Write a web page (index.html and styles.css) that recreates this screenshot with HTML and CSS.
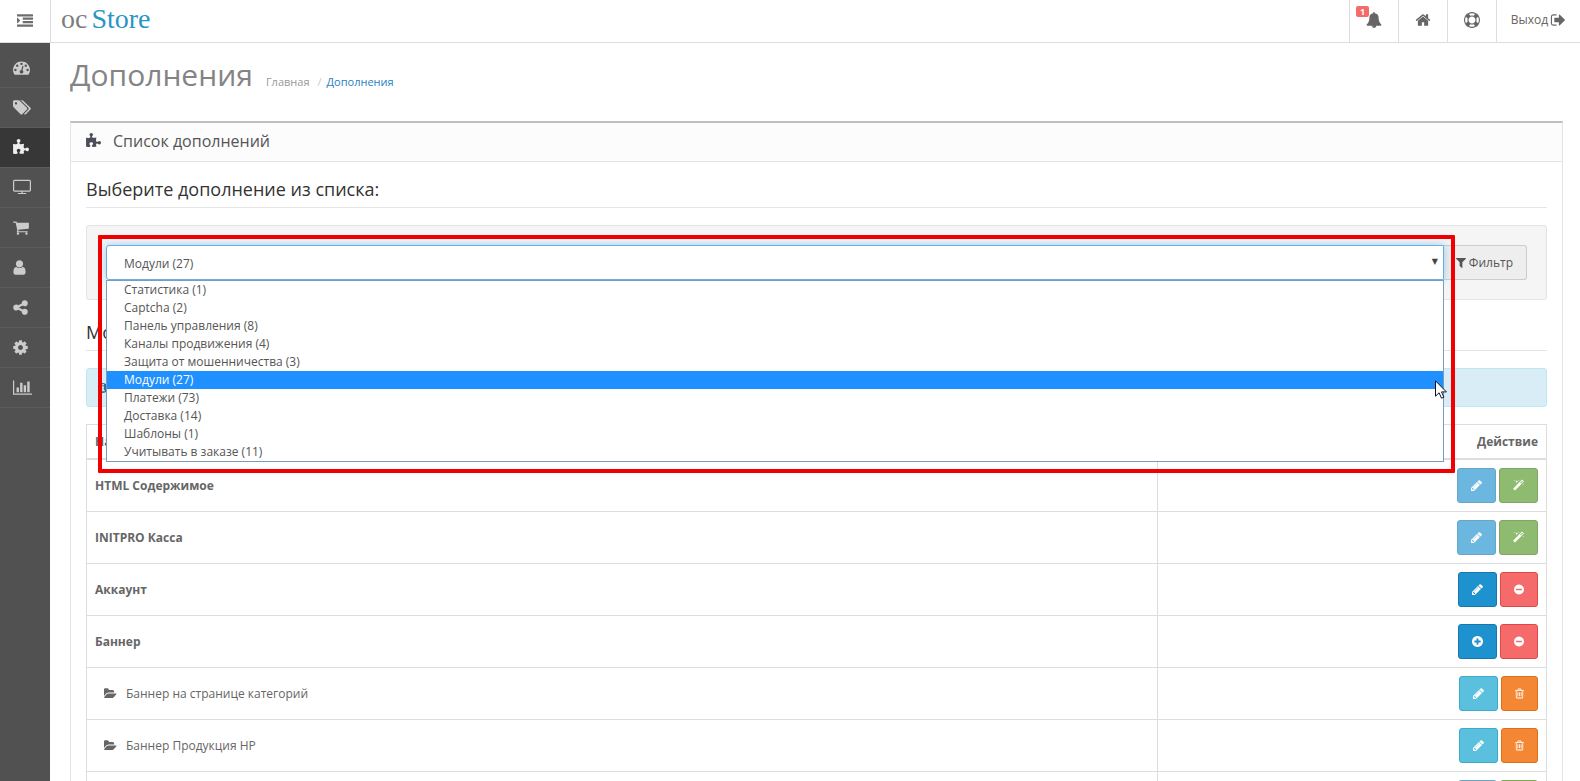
FILE: index.html
```html
<!DOCTYPE html>
<html lang="ru">
<head>
    <meta charset="UTF-8">
    <meta name="viewport" content="width=device-width, initial-scale=1.0">
    <title>Дополнения</title>
    <link rel="stylesheet" href="styles.css">
</head>
<body>
<svg class="sprite" aria-hidden="true">
    <symbol id="i-indent" viewBox="0 0 1792 1792"><path d="M352 832q0 14-9 23l-288 288q-9 9-23 9-13 0-22.500-9.500t-9.500-22.500v-576q0-13 9.500-22.500t22.500-9.500q14 0 23 9l288 288q9 9 9 23zm1440 480v192q0 13-9.500 22.500t-22.500 9.500h-1728q-13 0-22.500-9.500t-9.500-22.500v-192q0-13 9.500-22.500t22.500-9.500h1728q13 0 22.500 9.500t9.500 22.500zm0-384v192q0 13-9.500 22.500t-22.500 9.500h-1088q-13 0-22.500-9.500t-9.500-22.500v-192q0-13 9.500-22.500t22.500-9.500h1088q13 0 22.500 9.500t9.500 22.500zm0-384v192q0 13-9.500 22.500t-22.500 9.500h-1088q-13 0-22.500-9.500t-9.500-22.500v-192q0-13 9.500-22.500t22.500-9.500h1088q13 0 22.500 9.500t9.500 22.500zm0-384v192q0 13-9.500 22.500t-22.500 9.500h-1728q-13 0-22.500-9.500t-9.500-22.500v-192q0-13 9.500-22.500t22.500-9.500h1728q13 0 22.500 9.500t9.500 22.500z"/></symbol>
    <symbol id="i-dashboard" viewBox="0 0 1792 1792"><path d="M384 1152q0-53-37.500-90.500t-90.500-37.500-90.500 37.500-37.500 90.500 37.500 90.500 90.500 37.500 90.500-37.500 37.500-90.500zm192-448q0-53-37.500-90.500t-90.500-37.500-90.500 37.500-37.500 90.500 37.500 90.500 90.500 37.500 90.500-37.500 37.500-90.500zm428 481l101-382q6-26-7.500-48.500t-38.500-29.500-48 6.500-30 39.500l-101 382q-60 5-107 43.500t-63 98.500q-20 77 20 146t117 89 146-20 89-117q16-60-6-117t-72-91zm660-33q0-53-37.500-90.500t-90.500-37.500-90.500 37.500-37.500 90.500 37.500 90.500 90.500 37.500 90.500-37.500 37.500-90.500zm-640-640q0-53-37.500-90.500t-90.500-37.500-90.500 37.500-37.500 90.500 37.500 90.500 90.500 37.500 90.500-37.500 37.500-90.500zm448 192q0-53-37.500-90.500t-90.500-37.500-90.500 37.500-37.500 90.500 37.500 90.500 90.500 37.500 90.500-37.500 37.500-90.500zm320 448q0 261-141 483-19 29-54 29h-1402q-35 0-54-29-141-221-141-483 0-182 71-348t191-286 286-191 348-71 348 71 286 191 191 286 71 348z"/></symbol>
    <symbol id="i-tags" viewBox="0 0 1920 1792"><path d="M448 448q0-53-37.500-90.500t-90.500-37.500-90.500 37.500-37.500 90.500 37.500 90.500 90.500 37.500 90.500-37.500 37.500-90.500zm1067 576q0 53-37 90l-491 492q-39 37-91 37-53 0-90-37l-715-716q-38-37-64.500-101t-26.500-117v-416q0-52 38-90t90-38h416q53 0 117 26.500t102 64.500l715 714q37 39 37 91zm384 0q0 53-37 90l-491 492q-39 37-91 37-36 0-59-14t-53-45l470-470q37-37 37-90 0-52-37-91l-715-714q-38-38-102-64.500t-117-26.500h224q53 0 117 26.500t102 64.500l715 714q37 39 37 91z"/></symbol>
    <symbol id="i-puzzle" viewBox="64 0 1664 1792"><path d="M1728 1098q0 81-44.500 135t-123.500 54q-41 0-77.500-17.500t-59-38-56.500-38-71-17.500q-110 0-110 124 0 39 16 115t15 115v5q-22 0-33 1-34 3-97.500 11.500t-115.500 13.500-98 5q-61 0-103-26.500t-42-83.500q0-37 17.500-71t38-56.500 38-59 17.500-77.500q0-79-54-123.500t-135-44.500q-84 0-143 45.500t-59 127.500q0 43 15 83t33.500 64.500 33.500 53 15 50.500q0 45-46 89-37 35-117 35-95 0-245-24-9-2-27.500-4t-27.500-4l-13-2q-1 0-3-1-2 0-2-1v-1024q2 1 17.500 3.500t34 5 21.500 3.500q150 24 245 24 80 0 117-35 46-44 46-89 0-22-15-50.500t-33.500-53-33.500-64.500-15-83q0-82 59-127.500t144-45.500q80 0 134 44.500t54 123.500q0 41-17.500 77.500t-38 59-38 56.500-17.500 71q0 57 42 83.500t103 26.500q64 0 180-15t163-17v2q-1 2-3.500 17.500t-5 34-3.500 21.500q-24 150-24 245 0 80 35 117 44 46 89 46 22 0 50.500-15t53-33.500 64.500-33.500 83-15q82 0 127.500 59t45.500 143z"/></symbol>
    <symbol id="i-tv" viewBox="0 -64 1920 1792"><path d="M1792 1120v-960q0-13-9.500-22.500t-22.500-9.500h-1600q-13 0-22.500 9.500t-9.500 22.500v960q0 13 9.500 22.500t22.500 9.500h1600q13 0 22.500-9.500t9.500-22.500zm128-960v960q0 66-47 113t-113 47h-736v128h352q14 0 23 9t9 23v64q0 14-9 23t-23 9h-832q-14 0-23-9t-9-23v-64q0-14 9-23t23-9h352v-128h-736q-66 0-113-47t-47-113v-960q0-66 47-113t113-47h1600q66 0 113 47t47 113z"/></symbol>
    <symbol id="i-cart" viewBox="64 0 1664 1792"><path d="M704 1536q0 52-38 90t-90 38-90-38-38-90 38-90 90-38 90 38 38 90zm896 0q0 52-38 90t-90 38-90-38-38-90 38-90 90-38 90 38 38 90zm128-1088v512q0 24-16.500 42.500t-40.500 21.500l-1044 122q13 60 13 70 0 16-24 64h920q26 0 45 19t19 45-19 45-45 19h-1024q-26 0-45-19t-19-45q0-11 8-31.500t16-36 21.500-40 15.500-29.500l-177-823h-204q-26 0-45-19t-19-45 19-45 45-19h256q16 0 28.500 6.500t19.500 15.500 13 24.500 8 26 5.500 29.500 4.500 26h1201q26 0 45 19t19 45z"/></symbol>
    <symbol id="i-user" viewBox="256 0 1280 1792"><path d="M1536 1399q0 109-62.500 187t-150.500 78h-854q-88 0-150.500-78t-62.500-187q0-85 8.500-160.500t31.500-152 58.500-131 94-89 134.500-34.500q131 128 313 128t313-128q76 0 134.500 34.500t94 89 58.500 131 31.500 152 8.500 160.500zm-256-887q0 159-112.500 271.500t-271.500 112.500-271.500-112.500-112.500-271.500 112.500-271.500 271.500-112.500 271.500 112.500 112.500 271.500z"/></symbol>
    <symbol id="i-share" viewBox="128 0 1536 1792"><path d="M1344 1024q133 0 226.500 93.500t93.500 226.500-93.500 226.500-226.500 93.500-226.500-93.500-93.500-226.500q0-12 2-34l-360-180q-92 86-218 86-133 0-226.500-93.500t-93.500-226.500 93.500-226.500 226.500-93.500q126 0 218 86l360-180q-2-22-2-34 0-133 93.500-226.500t226.500-93.500 226.500 93.500 93.500 226.500-93.500 226.500-226.500 93.500q-126 0-218-86l-360 180q2 22 2 34t-2 34l360 180q92-86 218-86z"/></symbol>
    <symbol id="i-cog" viewBox="128 0 1536 1792"><path d="M1152 896q0-106-75-181t-181-75-181 75-75 181 75 181 181 75 181-75 75-181zm512-109v222q0 12-8 23t-20 13l-185 28q-19 54-39 91 35 50 107 138 10 12 10 25t-9 23q-27 37-99 108t-94 71q-12 0-26-9l-138-108q-44 23-91 38-16 136-29 186-7 28-36 28h-222q-14 0-24.500-8.500t-11.500-21.500l-28-184q-49-16-90-37l-141 107q-10 9-25 9-14 0-25-11-126-114-165-168-7-10-7-23 0-12 8-23 15-21 51-66.500t54-70.500q-27-50-41-99l-183-27q-13-2-21-12.500t-8-23.500v-222q0-12 8-23t19-13l186-28q14-46 39-92-40-57-107-138-10-12-10-24 0-10 9-23 26-36 98.500-107.500t94.500-71.500q13 0 26 10l138 107q44-23 91-38 16-136 29-186 7-28 36-28h222q14 0 24.500 8.500t11.500 21.500l28 184q49 16 90 37l142-107q9-9 24-9 13 0 25 10 129 119 165 170 7 8 7 22 0 12-8 23-15 21-51 66.500t-54 70.500q26 50 41 98l183 28q13 2 21 12.500t8 23.500z"/></symbol>
    <symbol id="i-chart" viewBox="0 0 2048 1792"><path d="M640 896v512h-256v-512h256zm384-512v1024h-256v-1024h256zm1024 1152v128h-2048v-1536h128v1408h1920zm-640-896v768h-256v-768h256zm384-384v1152h-256v-1152h256z"/></symbol>
    <symbol id="i-bell" viewBox="0 0 1792 1792"><path d="M912 1696q0-16-16-16-59 0-101.500-42.500t-42.500-101.500q0-16-16-16t-16 16q0 73 51.500 124.500t124.500 51.500q16 0 16-16zm816-288q0 52-38 90t-90 38h-448q0 106-75 181t-181 75-181-75-75-181h-448q-52 0-90-38t-38-90q50-42 91-88t85-119.500 74.500-158.500 50-206 19.500-260q0-152 117-282.500t307-158.500q-8-19-8-39 0-40 28-68t68-28 68 28 28 68q0 20-8 39 190 28 307 158.500t117 282.500q0 139 19.500 260t50 206 74.500 158.500 85 119.500 91 88z"/></symbol>
    <symbol id="i-home" viewBox="64 0 1664 1792"><path d="M1472 992v480q0 26-19 45t-45 19h-384v-384h-256v384h-384q-26 0-45-19t-19-45v-480q0-1 .5-3t.5-3l575-474 575 474q1 2 1 6zm223-69l-62 74q-8 9-21 11h-3q-13 0-21-7l-692-577-692 577q-12 8-24 7-13-2-21-11l-62-74q-8-10-7-23.500t11-21.500l719-599q32-26 76-26t76 26l244 204v-195q0-14 9-23t23-9h192q14 0 23 9t9 23v408l219 182q10 8 11 21.500t-7 23.500z"/></symbol>
    <symbol id="i-ring" viewBox="0 0 1792 1792"><path d="M896 0q182 0 348 71t286 191 191 286 71 348-71 348-191 286-286 191-348 71-348-71-286-191-191-286-71-348 71-348 191-286 286-191 348-71zm0 128q-190 0-361 90l194 194q82-28 167-28t167 28l194-194q-171-90-361-90zm-678 1129l194-194q-28-82-28-167t28-167l-194-194q-90 171-90 361t90 361zm678 407q190 0 361-90l-194-194q-82 28-167 28t-167-28l-194 194q171 90 361 90zm0-384q159 0 271.500-112.500t112.500-271.500-112.500-271.500-271.500-112.500-271.500 112.500-112.500 271.500 112.500 271.500 271.500 112.500zm484-217l194 194q90-171 90-361t-90-361l-194 194q28 82 28 167t-28 167z"/></symbol>
    <symbol id="i-signout" viewBox="64 0 1600 1792"><path d="M704 1440q0 4 1 20t.5 26.500-3 23.500-10 19.500-20.500 6.500h-320q-119 0-203.500-84.500t-84.500-203.500v-704q0-119 84.500-203.500t203.500-84.500h320q13 0 22.500 9.500t9.500 22.500q0 4 1 20t.5 26.500-3 23.500-10 19.500-20.500 6.500h-320q-66 0-113 47t-47 113v704q0 66 47 113t113 47h312l11.500 1 11.500 3 8 5.500 7 9 2 13.500zm928-544q0 26-19 45l-544 544q-19 19-45 19t-45-19-19-45v-288h-448q-26 0-45-19t-19-45v-384q0-26 19-45t45-19h448v-288q0-26 19-45t45-19 45 19l544 544q19 19 19 45z"/></symbol>
    <symbol id="i-pencil" viewBox="128 0 1536 1792"><path d="M491 1536l91-91-235-235-91 91v107h128v128h107zm523-928q0-22-22-22-10 0-17 7l-542 542q-7 7-7 17 0 22 22 22 10 0 17-7l542-542q7-7 7-17zm-54-192l416 416-832 832h-416v-416zm683 96q0 53-37 90l-166 166-416-416 166-165q36-38 90-38 53 0 91 38l235 234q37 39 37 91z"/></symbol>
    <symbol id="i-magic" viewBox="64 0 1664 1792"><path d="M1254 581l293-293-107-107-293 293zm447-293q0 27-18 45l-1286 1286q-18 18-45 18t-45-18l-198-198q-18-18-18-45t18-45l1286-1286q18-18 45-18t45 18l198 198q18 18 18 45zm-1351-190l98 30-98 30-30 98-30-98-98-30 98-30 30-98zm350 162l196 60-196 60-60 196-60-196-196-60 196-60 60-196zm930 478l98 30-98 30-30 98-30-98-98-30 98-30 30-98zm-640-640l98 30-98 30-30 98-30-98-98-30 98-30 30-98z"/></symbol>
    <symbol id="i-minus" viewBox="128 0 1536 1792"><path d="M1344 960v-128q0-26-19-45t-45-19h-768q-26 0-45 19t-19 45v128q0 26 19 45t45 19h768q26 0 45-19t19-45zm320-64q0 209-103 385.500t-279.500 279.500-385.500 103-385.500-103-279.500-279.500-103-385.500 103-385.500 279.500-279.500 385.500-103 385.500 103 279.500 279.500 103 385.500z"/></symbol>
    <symbol id="i-plus" viewBox="128 0 1536 1792"><path d="M1344 960v-128q0-26-19-45t-45-19h-256v-256q0-26-19-45t-45-19h-128q-26 0-45 19t-19 45v256h-256q-26 0-45 19t-19 45v128q0 26 19 45t45 19h256v256q0 26 19 45t45 19h128q26 0 45-19t19-45v-256h256q26 0 45-19t19-45zm320-64q0 209-103 385.500t-279.500 279.500-385.500 103-385.500-103-279.500-279.500-103-385.500 103-385.500 279.500-279.500 385.500-103 385.500 103 279.500 279.500 103 385.500z"/></symbol>
    <symbol id="i-trash" viewBox="192 0 1408 1792"><path d="M704 736v576q0 14-9 23t-23 9h-64q-14 0-23-9t-9-23v-576q0-14 9-23t23-9h64q14 0 23 9t9 23zm256 0v576q0 14-9 23t-23 9h-64q-14 0-23-9t-9-23v-576q0-14 9-23t23-9h64q14 0 23 9t9 23zm256 0v576q0 14-9 23t-23 9h-64q-14 0-23-9t-9-23v-576q0-14 9-23t23-9h64q14 0 23 9t9 23zm128 724v-948h-896v948q0 22 7 40.500t14.500 27 10.500 8.500h832q3 0 10.500-8.500t14.500-27 7-40.500zm-672-1076h448l-48-117q-7-9-17-11h-317q-10 2-17 11zm928 32v64q0 14-9 23t-23 9h-96v948q0 83-47 143.500t-113 60.500h-832q-66 0-113-58.500t-47-141.500v-952h-96q-14 0-23-9t-9-23v-64q0-14 9-23t23-9h309l70-167q15-37 54-63t79-26h320q40 0 79 26t54 63l70 167h309q14 0 23 9t9 23z"/></symbol>
    <symbol id="i-folder" viewBox="0 0 1879 1792"><path d="M1815 952q0 31-31 66l-336 396q-43 51-120.500 86.500t-143.500 35.500h-1088q-34 0-60.500-13t-26.500-43q0-31 31-66l336-396q43-51 120.500-86.500t143.500-35.500h1088q34 0 60.500 13t26.500 43zm-343-344v160h-832q-94 0-197 47.500t-164 119.500l-337 396-5 6q0-4-.5-12.500t-.5-12.500v-960q0-92 66-158t158-66h320q92 0 158 66t66 158v32h544q92 0 158 66t66 158z"/></symbol>
    <symbol id="i-filter" viewBox="192 0 1408 1792"><path d="M1595 295q17 41-14 70l-493 493v742q0 42-39 59-13 5-25 5-27 0-45-19l-256-256q-19-19-19-45v-486l-493-493q-31-29-14-70 17-39 59-39h1280q42 0 59 39z"/></symbol>
    <symbol id="i-info" viewBox="128 0 1536 1792"><path d="M1152 1376v-160q0-14-9-23t-23-9h-96v-512q0-14-9-23t-23-9h-320q-14 0-23 9t-9 23v160q0 14 9 23t23 9h96v320h-96q-14 0-23 9t-9 23v160q0 14 9 23t23 9h448q14 0 23-9t9-23zm-128-896v-160q0-14-9-23t-23-9h-192q-14 0-23 9t-9 23v160q0 14 9 23t23 9h192q14 0 23-9t9-23zm640 416q0 209-103 385.500t-279.500 279.500-385.500 103-385.500-103-279.500-279.500-103-385.500 103-385.500 279.500-279.500 385.500-103 385.500 103 279.500 279.500 103 385.500z"/></symbol>
</svg>

<div class="container">
    <header class="header">
        <button class="menu-toggle" aria-label="Меню"><svg><use href="#i-indent"/></svg></button>
        <a class="logo" href="#"><span class="logo-oc">oc</span><span class="logo-store">Store</span></a>
        <nav class="top-nav">
            <a href="#" aria-label="Уведомления"><span class="badge">1</span><svg><use href="#i-bell"/></svg></a>
            <a href="#" aria-label="Магазин"><svg><use href="#i-home"/></svg></a>
            <a href="#" aria-label="Помощь"><svg><use href="#i-ring"/></svg></a>
            <a class="logout" href="#">Выход <svg><use href="#i-signout"/></svg></a>
        </nav>
    </header>

    <div class="layout">
        <nav class="sidebar">
            <a href="#" aria-label="Панель управления"><svg class="w-17"><use href="#i-dashboard"/></svg></a>
            <a href="#" aria-label="Каталог"><svg class="w-18"><use href="#i-tags"/></svg></a>
            <a href="#" aria-label="Дополнения" class="active"><svg class="w-16"><use href="#i-puzzle"/></svg></a>
            <a href="#" aria-label="Дизайн"><svg class="w-18"><use href="#i-tv"/></svg></a>
            <a href="#" aria-label="Продажи"><svg class="w-16"><use href="#i-cart"/></svg></a>
            <a href="#" aria-label="Клиенты"><svg class="w-13"><use href="#i-user"/></svg></a>
            <a href="#" aria-label="Маркетинг"><svg class="w-15"><use href="#i-share"/></svg></a>
            <a href="#" aria-label="Система"><svg class="w-15"><use href="#i-cog"/></svg></a>
            <a href="#" aria-label="Отчеты"><svg class="w-19"><use href="#i-chart"/></svg></a>
        </nav>

        <main class="content">
            <div class="page-header">
                <h1>Дополнения</h1>
                <ul class="breadcrumb">
                    <li><a href="#">Главная</a></li>
                    <li><a href="#" class="current">Дополнения</a></li>
                </ul>
            </div>

            <section class="panel">
                <div class="panel-heading">
                    <svg><use href="#i-puzzle"/></svg>
                    <h2>Список дополнений</h2>
                </div>
                <div class="panel-body">
                    <h3 class="legend"><label for="type">Выберите дополнение из списка:</label></h3>
                    <div class="well">
                        <div class="select-wrap">
                            <select id="type">
                                <option>Модули (27)</option>
                            </select>
                            <span class="arrow">▼</span>
                            <ul class="options">
                                <li>Статистика (1)</li>
                                <li>Captcha (2)</li>
                                <li>Панель управления (8)</li>
                                <li>Каналы продвижения (4)</li>
                                <li>Защита от мошенничества (3)</li>
                                <li class="selected">Модули (27)</li>
                                <li>Платежи (73)</li>
                                <li>Доставка (14)</li>
                                <li>Шаблоны (1)</li>
                                <li>Учитывать в заказе (11)</li>
                            </ul>
                            <div class="highlight"></div>
                            <svg class="cursor" viewBox="0 0 12 19"><path d="M.5.800v15.400l3.600-3.400 2.400 5.400 2.400-1-2.400-5.300h4.900z" fill="#fff" stroke="#112" stroke-width="1"/></svg>
                        </div>
                        <button class="btn-filter"><svg><use href="#i-filter"/></svg> Фильтр</button>
                    </div>

                    <h3 class="legend">Модули</h3>
                    <div class="alert"><svg><use href="#i-info"/></svg></div>

                    <table class="table">
                        <thead>
                        <tr><th>Название модуля</th><th class="action">Действие</th></tr>
                        </thead>
                        <tbody>
                        <tr>
                            <td><b>HTML Содержимое</b></td>
                            <td class="action"><div class="buttons"><button class="btn primary" disabled aria-label="Редактировать"><svg class="wide"><use href="#i-pencil"/></svg></button><button class="btn success" disabled aria-label="Установить"><svg class="wide"><use href="#i-magic"/></svg></button></div></td>
                        </tr>
                        <tr>
                            <td><b>INITPRO Касса</b></td>
                            <td class="action"><div class="buttons"><button class="btn primary" disabled aria-label="Редактировать"><svg class="wide"><use href="#i-pencil"/></svg></button><button class="btn success" disabled aria-label="Установить"><svg class="wide"><use href="#i-magic"/></svg></button></div></td>
                        </tr>
                        <tr>
                            <td><b>Аккаунт</b></td>
                            <td class="action"><div class="buttons"><button class="btn primary" aria-label="Редактировать"><svg class="wide"><use href="#i-pencil"/></svg></button><button class="btn danger" aria-label="Удалить"><svg><use href="#i-minus"/></svg></button></div></td>
                        </tr>
                        <tr>
                            <td><b>Баннер</b></td>
                            <td class="action"><div class="buttons"><button class="btn primary" aria-label="Добавить"><svg class="wide"><use href="#i-plus"/></svg></button><button class="btn danger" aria-label="Удалить"><svg><use href="#i-minus"/></svg></button></div></td>
                        </tr>
                        <tr>
                            <td><div class="child"><svg><use href="#i-folder"/></svg>Баннер на странице категорий</div></td>
                            <td class="action"><div class="buttons"><button class="btn info" aria-label="Редактировать"><svg class="wide"><use href="#i-pencil"/></svg></button><button class="btn warning" aria-label="Удалить"><svg class="narrow"><use href="#i-trash"/></svg></button></div></td>
                        </tr>
                        <tr>
                            <td><div class="child"><svg><use href="#i-folder"/></svg>Баннер Продукция HP</div></td>
                            <td class="action"><div class="buttons"><button class="btn info" aria-label="Редактировать"><svg class="wide"><use href="#i-pencil"/></svg></button><button class="btn warning" aria-label="Удалить"><svg class="narrow"><use href="#i-trash"/></svg></button></div></td>
                        </tr>
                        <tr>
                            <td></td>
                            <td class="action"><div class="buttons"><button class="btn primary" disabled aria-label="Редактировать"><svg class="wide"><use href="#i-pencil"/></svg></button><button class="btn success" aria-label="Установить"><svg><use href="#i-magic"/></svg></button></div></td>
                        </tr>
                        </tbody>
                    </table>
                </div>
            </section>
        </main>
    </div>
</div>
</body>
</html>
```

FILE: styles.css
```css
* {
    margin: 0;
    padding: 0;
    box-sizing: border-box;
}

body {
    font-family: 'Open Sans', sans-serif;
    font-size: 12px;
    line-height: 17px;
    color: #666;
    background: #fff;
}

a {
    color: inherit;
    text-decoration: none;
}

ul {
    list-style: none;
}

button, select {
    font: inherit;
    color: inherit;
}

svg {
    fill: currentColor;
    flex: none;
}

.sprite {
    display: none;
}

.container {
    display: flex;
    flex-direction: column;
    height: 100vh;
    overflow: hidden;
}

/* header */
.header {
    display: flex;
    flex: none;
    height: 43px;
    border-bottom: 1px solid #ddd;
}

.header svg {
    width: 16px;
    height: 16px;
}

.menu-toggle {
    width: 51px;
    border: none;
    border-right: 1px solid #ddd;
    background: #fff;
    cursor: pointer;
    display: flex;
    align-items: center;
    justify-content: center;
    color: #6d6d6d;
}

.logo {
    display: flex;
    gap: 4px;
    margin-left: 10px;
    font-family: 'Liberation Serif', serif;
    font-size: 28px;
    line-height: 38px;
}

.logo-oc {
    color: #7d7d7d;
}

.logo-store {
    color: #2a94c3;
}

.top-nav {
    display: flex;
    margin-left: auto;
}

.top-nav a {
    position: relative;
    display: flex;
    align-items: center;
    justify-content: center;
    width: 49px;
    padding-bottom: 3px;
    border-left: 1px solid #ddd;
}

.top-nav .logout {
    width: 84px;
    gap: 2px;
}

.top-nav .badge {
    position: absolute;
    top: 6px;
    left: 6px;
    width: 13px;
    height: 11px;
    border-radius: 2px;
    background: #f56b6b;
    color: #fff;
    font-size: 9px;
    font-weight: bold;
    line-height: 11px;
    text-align: center;
}

/* main layout */
.layout {
    display: flex;
    flex: 1;
    min-height: 0;
}

.sidebar {
    flex: none;
    width: 50px;
    padding-top: 5px;
    background: #515151;
}

.sidebar a {
    display: flex;
    align-items: center;
    height: 40px;
    padding-left: 13px;
    border-bottom: 1px solid #5c5c5c;
    color: #ccc;
}

.sidebar a.active {
    background: #373737;
    color: #eee;
}

.sidebar svg {
    height: 17px;
}

.w-13 { width: 13px; }
.w-15 { width: 15px; }
.w-16 { width: 16px; }
.w-17 { width: 17px; }
.w-18 { width: 18px; }
.w-19 { width: 19px; }

.content {
    flex: 1;
    min-width: 0;
    padding: 12px 17px 0 20px;
}

.page-header {
    display: flex;
    align-items: baseline;
    gap: 13px;
    margin-bottom: 26px;
}

.page-header h1 {
    font-size: 30px;
    font-weight: normal;
    line-height: 40px;
    color: #848484;
}

.breadcrumb {
    display: flex;
    font-size: 11px;
    color: #999;
}

.breadcrumb li + li::before {
    content: "/";
    padding: 0 5px 0 8px;
    color: #ccc;
}

.breadcrumb .current {
    color: #1e7fbf;
}

/* panel */
.panel {
    border: 1px solid #e4e4e4;
    border-top: 2px solid #bfbfbf;
}

.panel-heading {
    display: flex;
    align-items: center;
    gap: 12px;
    height: 39px;
    padding: 0 15px 2px;
    border-bottom: 1px solid #e4e4e4;
    background: #fcfcfc;
    color: #4c4d5a;
}

.panel-heading svg {
    width: 15px;
    height: 16px;
}

.panel-heading h2 {
    font-size: 16px;
    font-weight: normal;
    color: #555;
}

.panel-body {
    padding: 15px;
}

.legend {
    margin-bottom: 17px;
    padding-bottom: 6px;
    border-bottom: 1px solid #e5e5e5;
    font-size: 18px;
    font-weight: normal;
    line-height: 24px;
    color: #333;
}

.well {
    display: flex;
    margin-bottom: 20px;
    padding: 19px;
    border: 1px solid #e3e3e3;
    border-radius: 3px;
    background: #f5f5f5;
}

.select-wrap {
    position: relative;
    z-index: 1;
    flex: 1;
}

.select-wrap select {
    display: block;
    width: 100%;
    height: 35px;
    padding: 2px 17px 0;
    border: 1px solid #66afe9;
    border-radius: 3px 0 0 3px;
    background: #fff;
    box-shadow: 0 0 8px rgba(102, 175, 233, 0.6);
    appearance: none;
    color: #555;
}

.arrow {
    position: absolute;
    top: 8px;
    right: 6px;
    font-family: 'DejaVu Sans', sans-serif;
    font-size: 8px;
    color: #444;
    pointer-events: none;
}

.options {
    position: absolute;
    top: 35px;
    left: 0;
    right: 0;
    border: 1px solid #7a9cc4;
    background: #fff;
    line-height: 18px;
    color: #555;
}

.options li {
    padding: 0 17px;
}

.options .selected {
    background: #1e90ff;
    color: #fff;
}

.highlight {
    position: absolute;
    top: -10px;
    right: -11px;
    left: -8px;
    height: 238px;
    border: 4px solid #f00000;
    border-radius: 1px;
    pointer-events: none;
}

.cursor {
    position: absolute;
    top: 135px;
    right: -3px;
    width: 12px;
    height: 19px;
}

.btn-filter {
    display: flex;
    align-items: center;
    gap: 3px;
    height: 35px;
    padding: 0 13px 1px 12px;
    border: 1px solid #ccc;
    border-left: none;
    border-radius: 0 3px 3px 0;
    background: #eee;
    color: #555;
    cursor: pointer;
}

.btn-filter svg {
    width: 10px;
    height: 13px;
}

.alert {
    display: flex;
    align-items: center;
    height: 39px;
    margin-bottom: 17px;
    padding: 0 11px;
    border: 1px solid #bce8f1;
    border-radius: 3px;
    background: #d9edf7;
    color: #31708f;
}

.alert svg {
    width: 10px;
    height: 12px;
}

/* table */
.table {
    width: 100%;
    border-collapse: collapse;
}

.table th, .table td {
    padding: 8px;
    border: 1px solid #ddd;
    text-align: left;
}

.table th {
    border-bottom-width: 2px;
}

.table .action {
    width: 389px;
    text-align: right;
}

.child {
    display: flex;
    align-items: center;
    gap: 9px;
    padding-left: 9px;
}

.child svg {
    width: 13px;
    height: 13px;
}

.buttons {
    display: flex;
    justify-content: flex-end;
    gap: 3px;
}

.btn {
    display: flex;
    align-items: center;
    height: 35px;
    padding: 0 13px;
    border: 1px solid;
    border-radius: 3px;
    color: #fff;
    cursor: pointer;
}

.btn svg {
    width: 10px;
    height: 13px;
}

.btn svg.wide {
    width: 11px;
}

.btn svg.narrow {
    width: 9px;
}

.btn:disabled {
    opacity: 0.65;
    cursor: not-allowed;
}

.primary {
    background: #1e91cf;
    border-color: #1978ab;
}

.success {
    background: #8fbb6c;
    border-color: #7aae50;
}

.success:disabled {
    background: #529824;
    border-color: #3f751c;
}

.danger {
    background: #f56b6b;
    border-color: #e04848;
}

.info {
    background: #5bc0de;
    border-color: #3dabcc;
}

.warning {
    background: #f38733;
    border-color: #dd701c;
}
```
